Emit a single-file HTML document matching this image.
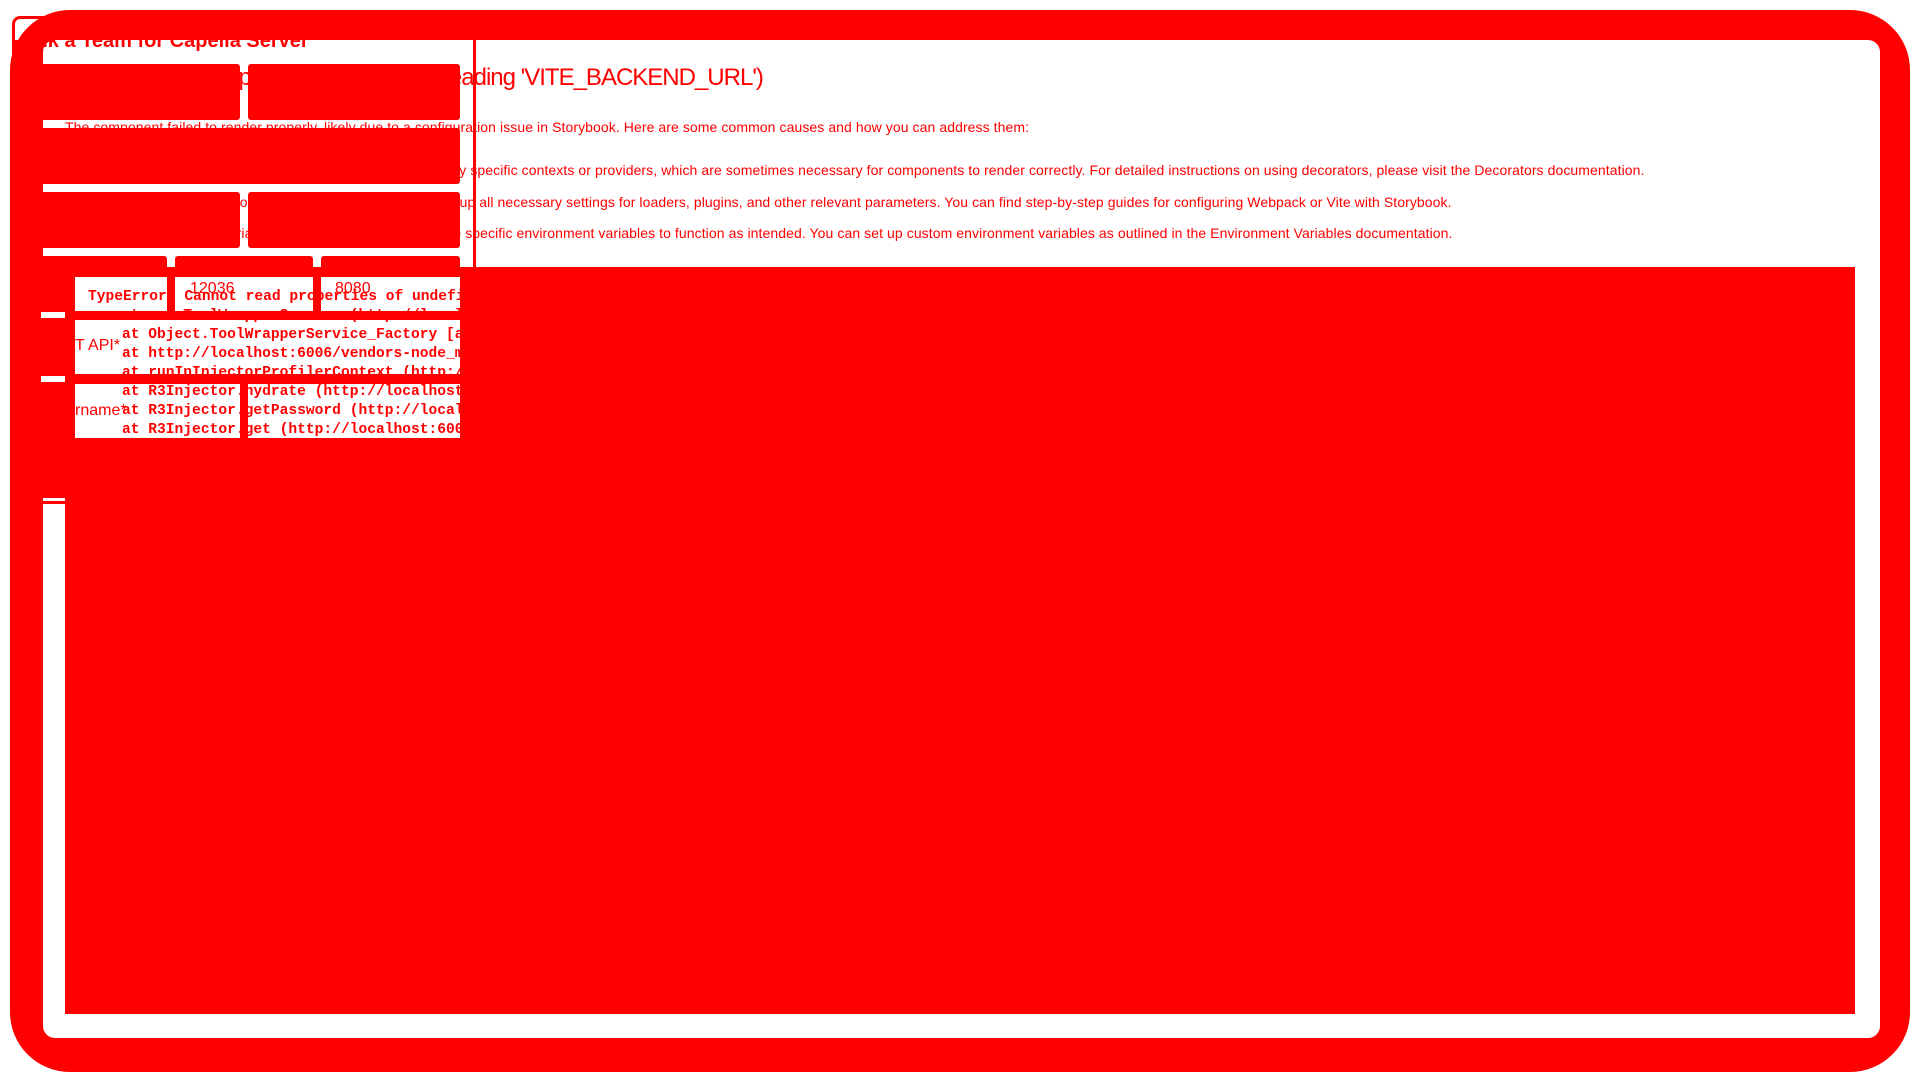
<!DOCTYPE html>
<html><head><meta charset="utf-8"><style>
body{margin:0;width:1920px;height:1080px;background:#fff;position:relative;overflow:hidden;font-family:"Liberation Sans",sans-serif;color:#f00}
.a{position:absolute}
.r{position:absolute;background:#f00}
.t{position:absolute;white-space:nowrap;color:#f00}
.m{font-family:"Liberation Mono",monospace;font-weight:bold;font-size:14.6px}
.p{font-size:14px;letter-spacing:0.08px}
</style></head><body>
<div class="a" style="left:10px;top:10px;width:1900px;height:1062px;background:#f00;border-radius:60px"></div>
<div class="a" style="left:43px;top:40px;width:1837px;height:998px;background:#fff;border-radius:12px"></div>
<div class="r" style="left:65px;top:267px;width:1790px;height:747px"></div>

<div class="t" style="left:30px;top:30px;font-size:20px;font-weight:bold">ink a Team for Capella Server</div>
<div class="t" style="left:80px;top:64px;font-size:24px;letter-spacing:-1px">Cannot read properties of undefined (reading 'VITE_BACKEND_URL')</div>
<div class="t p" style="left:65px;top:119px">The component failed to render properly, likely due to a configuration issue in Storybook. Here are some common causes and how you can address them:</div>
<div class="t p" style="left:85px;top:162px">Missing Context/Providers: You can use decorators to supply specific contexts or providers, which are sometimes necessary for components to render correctly. For detailed instructions on using decorators, please visit the Decorators documentation.</div>
<div class="t p" style="left:85px;top:194px">Misconfigured Webpack or Vite: Verify that Storybook picks up all necessary settings for loaders, plugins, and other relevant parameters. You can find step-by-step guides for configuring Webpack or Vite with Storybook.</div>
<div class="t p" style="left:85px;top:225px">Missing Environment Variables: Your Storybook may require specific environment variables to function as intended. You can set up custom environment variables as outlined in the Environment Variables documentation.</div>

<!-- dialog overlay -->
<div class="a" style="left:12px;top:16px;width:458px;height:482px;border:3px solid #f00;border-radius:8px"></div>
<div class="r" style="left:15px;top:40px;width:26px;height:480px"></div>
<div class="r" style="left:40px;top:64px;width:200px;height:56px;border-radius:3px"></div>
<div class="r" style="left:248px;top:64px;width:212px;height:56px;border-radius:3px"></div>
<div class="r" style="left:40px;top:128px;width:420px;height:56px;border-radius:3px"></div>
<div class="r" style="left:40px;top:192px;width:200px;height:56px;border-radius:3px"></div>
<div class="r" style="left:248px;top:192px;width:212px;height:56px;border-radius:3px"></div>
<div class="r" style="left:40px;top:256px;width:127px;height:20px;border-radius:3px"></div>
<div class="r" style="left:175px;top:256px;width:138px;height:20px;border-radius:3px"></div>
<div class="r" style="left:321px;top:256px;width:139px;height:20px;border-radius:3px"></div>
<div class="r" style="left:40px;top:276px;width:35px;height:36px"></div>
<div class="a" style="left:75px;top:277px;width:92px;height:34px;background:#fff"></div>
<div class="a" style="left:175px;top:277px;width:138px;height:34px;background:#fff"></div>
<div class="a" style="left:321px;top:277px;width:139px;height:34px;background:#fff"></div>
<div class="r" style="left:40px;top:312px;width:35px;height:66px"></div>
<div class="a" style="left:75px;top:320px;width:385px;height:54px;background:#fff"></div>
<div class="r" style="left:40px;top:378px;width:35px;height:120px"></div>
<div class="a" style="left:75px;top:384px;width:165px;height:54px;background:#fff"></div>
<div class="a" style="left:248px;top:384px;width:212px;height:54px;background:#fff"></div>
<div class="r" style="left:75px;top:438px;width:395px;height:60px"></div>
<div class="a" style="left:41px;top:312px;width:24px;height:6px;background:#fff"></div>
<div class="a" style="left:41px;top:376px;width:24px;height:6px;background:#fff"></div>
<div class="a" style="left:0;top:0;width:474px;height:500px;overflow:hidden">
<div class="t m" style="left:88px;top:289px">TypeError&nbsp;&nbsp;Cannot read properties of undefined</div>
<div class="a m" style="left:122px;top:307px;line-height:19px;white-space:pre">at new ToolWrapperService (http://localhost
at Object.ToolWrapperService_Factory [as fac
at http://localhost:6006/vendors-node_module
at runInInjectorProfilerContext (http://loca
at R3Injector.hydrate (http://localhost:6006
at R3Injector.getPassword (http://localhost:6006
at R3Injector.get (http://localhost:6006/ven</div>
</div>
<div class="t" style="left:75px;top:337px;font-size:16px">T API*</div>
<div class="t" style="left:75px;top:402px;font-size:16px">rname*</div>
<div class="t" style="left:190px;top:280px;font-size:16px">12036</div>
<div class="t" style="left:335px;top:280px;font-size:16px">8080</div>
</body></html>
